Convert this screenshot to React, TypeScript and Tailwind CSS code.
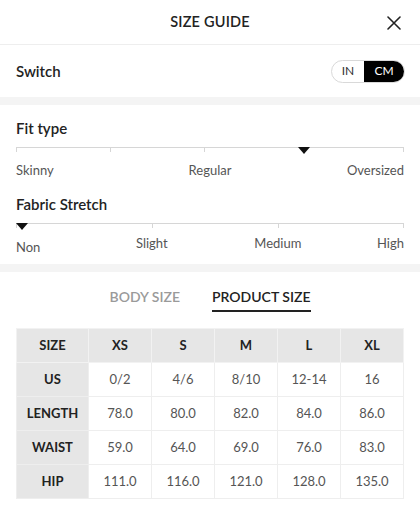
import React from 'react';

const rows = [
  { label: 'US', values: ['0/2', '4/6', '8/10', '12-14', '16'] },
  { label: 'LENGTH', values: ['78.0', '80.0', '82.0', '84.0', '86.0'] },
  { label: 'WAIST', values: ['59.0', '64.0', '69.0', '76.0', '83.0'] },
  { label: 'HIP', values: ['111.0', '116.0', '121.0', '128.0', '135.0'] },
];

const sizes = ['XS', 'S', 'M', 'L', 'XL'];

function Marker({ className }: { className: string }) {
  return (
    <svg
      width="12"
      height="7"
      viewBox="0 0 12 7"
      className={`absolute top-0 -translate-x-1/2 ${className}`}
    >
      <path d="M0 0 H12 L6 7 Z" fill="#111" />
    </svg>
  );
}

function Tick({ className }: { className: string }) {
  return <div className={`absolute top-0 h-[5px] w-px bg-[#d6d6d6] ${className}`} />;
}

export default function App() {
  return (
    <div
      className="w-[420px] h-[518px] overflow-hidden bg-white text-[#222]"
      style={{ fontFamily: 'Lato, "Open Sans", sans-serif' }}
    >
      {/* header */}
      <div className="relative flex h-[45px] items-center justify-center border-b border-[#eeeeee]">
        <h1 className="text-[14.5px] font-semibold tracking-[0.2px]">SIZE GUIDE</h1>
        <button className="absolute right-[19px] top-[16px]">
          <svg width="14" height="14" viewBox="0 0 14 14">
            <path d="M1 1 L13 13 M13 1 L1 13" stroke="#222" strokeWidth="1.6" strokeLinecap="round" />
          </svg>
        </button>
      </div>

      {/* unit switch */}
      <div className="flex h-[52px] items-center justify-between pl-4 pr-[15px]">
        <span className="text-[15px] font-semibold">Switch</span>
        <div className="flex h-[23px] overflow-hidden rounded-full border border-[#d9d9d9] text-[12px]">
          <span className="flex w-[32px] items-center justify-center text-[#333]">IN</span>
          <span className="flex w-[40px] items-center justify-center bg-black text-white">CM</span>
        </div>
      </div>

      <div className="h-2 bg-[#f4f4f4]" />

      {/* fit section */}
      <div className="px-4 pt-[13px] pb-[12px]">
        <h2 className="text-[15px] font-semibold leading-5">Fit type</h2>
        <div className="relative mt-[9px] h-px bg-[#d6d6d6]">
          <Tick className="left-0" />
          <Tick className="left-[24.2%]" />
          <Tick className="left-[48.5%]" />
          <Tick className="right-0" />
          <Marker className="left-[74.2%]" />
        </div>
        <div className="mt-[13px] grid grid-cols-3 text-[13px] leading-[18px] text-[#555]">
          <span>Skinny</span>
          <span className="text-center">Regular</span>
          <span className="text-right">Oversized</span>
        </div>

        <h2 className="mt-[15px] text-[15px] font-semibold leading-5">Fabric Stretch</h2>
        <div className="relative mt-[9px] h-px bg-[#d6d6d6]">
          <Tick className="left-0" />
          <Tick className="left-[35%]" />
          <Tick className="left-[67.5%]" />
          <Tick className="right-0" />
          <Marker className="left-[6px]" />
        </div>
        <div className="relative mt-[10px] h-[18px] text-[13px] leading-[18px] text-[#555]">
          <span className="absolute left-0 top-[4px]">Non</span>
          <span className="absolute left-[35%] -translate-x-1/2">Slight</span>
          <span className="absolute left-[67.5%] -translate-x-1/2">Medium</span>
          <span className="absolute right-0">High</span>
        </div>
      </div>

      <div className="h-2 bg-[#f4f4f4]" />

      {/* tabs */}
      <div className="flex justify-center gap-8 pt-[15px] text-[14px] font-semibold leading-5">
        <span className="pb-[3px] text-[#9a9a9a]">BODY SIZE</span>
        <span className="border-b-2 border-[#222] pb-[3px] text-[#222]">PRODUCT SIZE</span>
      </div>

      {/* table */}
      <div className="mt-4 px-4">
        <table className="w-full table-fixed border-collapse text-center text-[13px]">
          <colgroup>
            <col className="w-[72px]" />
            <col />
            <col />
            <col />
            <col />
            <col />
          </colgroup>
          <thead>
            <tr className="h-[34px] bg-[#e6e6e6]">
              <th className="border border-[#f2f2f2] font-bold">SIZE</th>
              {sizes.map((s) => (
                <th key={s} className="border border-[#f2f2f2] font-bold">
                  {s}
                </th>
              ))}
            </tr>
          </thead>
          <tbody>
            {rows.map((r) => (
              <tr key={r.label} className="h-[34px]">
                <td className="border border-[#eeeeee] bg-[#e6e6e6] font-bold">{r.label}</td>
                {r.values.map((v, i) => (
                  <td key={i} className="border border-[#eeeeee] text-[#555]">
                    {v}
                  </td>
                ))}
              </tr>
            ))}
          </tbody>
        </table>
      </div>
    </div>
  );
}
